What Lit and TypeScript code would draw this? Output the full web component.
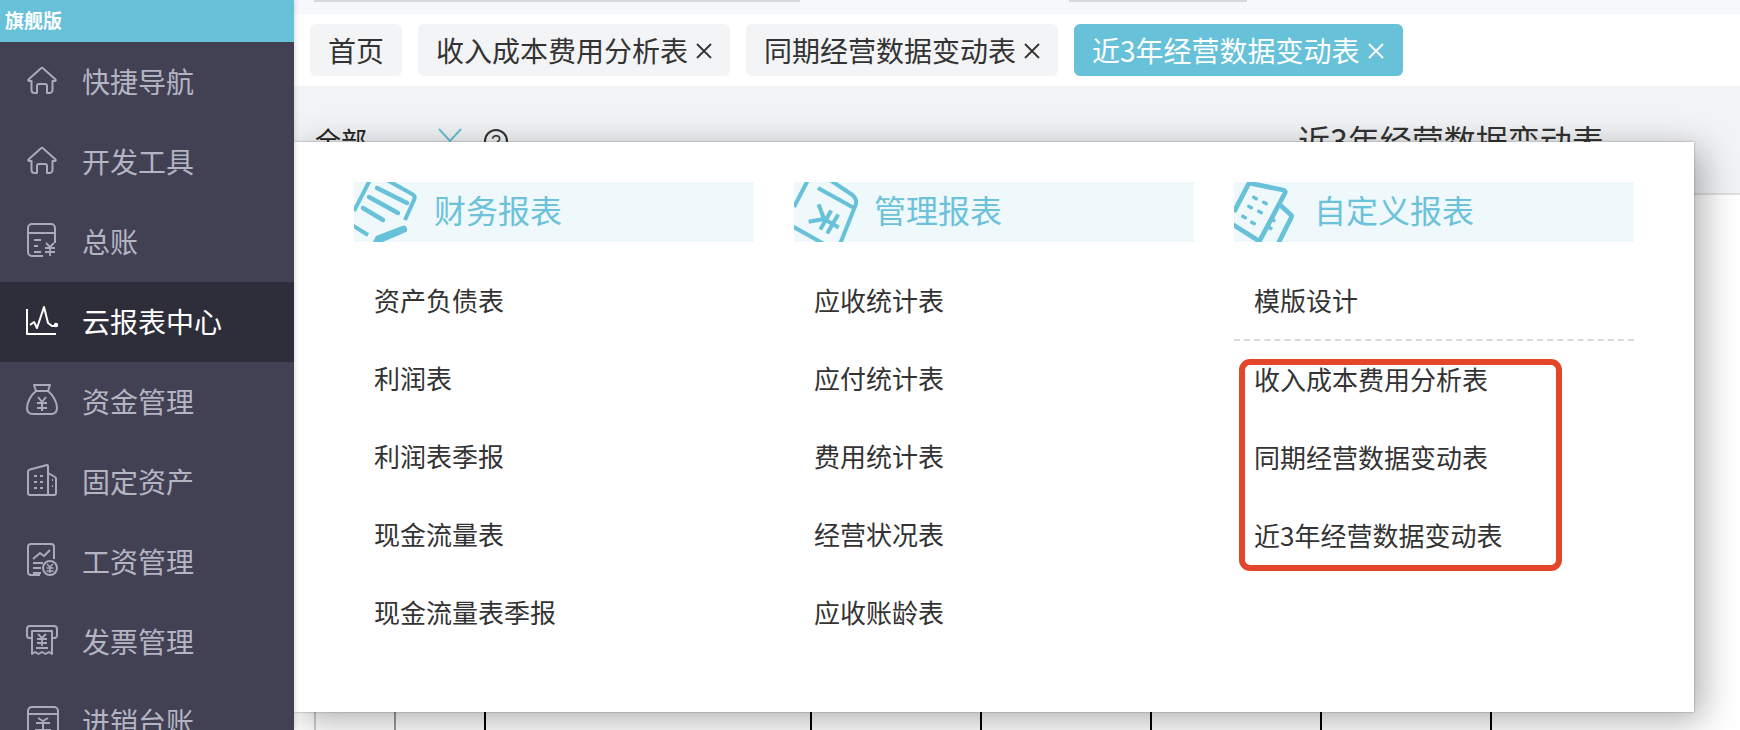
import { LitElement, html, css, svg } from "lit";
import { customElement } from "lit/decorators.js";

const homeIcon = svg`<path d="M2.5 13.5 15 2.2a1.6 1.6 0 0 1 2 0l12.5 11.3a.9.9 0 0 1-.6 1.6H26.5V24a3 3 0 0 1-3 3H21V20a2 2 0 0 0-2-2h-6a2 2 0 0 0-2 2v7H8.500a3 3 0 0 1-3-3v-8.900H3.100a.9.9 0 0 1-.6-1.600Z"/>`;

const sideIcons: Record<string, unknown> = {
  home: homeIcon,
  ledger: svg`<path d="M17 30H6a4 4 0 0 1-4-4V2a4 4 0 0 1 4-4h19a4 4 0 0 1 4 4v15"/><path d="M2 7h27"/><path d="M8 14h7M8 20h4M8 26h7"/><path d="M20 17l4 4 4-4M19 22h10M19 26h10M24 21v9" stroke-width="1.800"/>`,
  chart: svg`<path d="M1 3v25h29"/><path d="M4 19l4-3 3 6L18 1l4 16 4 3h4" stroke-linejoin="round"/><circle cx="30" cy="19" r="1.200" fill="currentColor"/>`,
  bag: svg`<path d="M10 5 8 -1h16l-2 6"/><path d="M10 5h12c5 4 9 11 9 17 0 4-2 6-6 6H7c-4 0-6-2-6-6 0-6 4-13 9-17Z"/><path d="M12 11l4 5 4-5M11 17h10M11 22h10M16 16v9"/>`,
  building: svg`<path d="M2 6v21a2 2 0 0 0 2 2h24a2 2 0 0 0 2-2V13a2 2 0 0 0-1-2l-7-4V0a1 1 0 0 0-1-1L4 3.500A2.500 2.500 0 0 0 2 6Z"/><path d="M22 7v22"/><path d="M8 10h3M14 10h3M8 16h3M14 16h3M8 22h3M14 22h3M26 14h1M26 20h1" stroke-width="2.200"/>`,
  salary: svg`<path d="M14 29H5a3 3 0 0 1-3-3V1a3 3 0 0 1 3-3h20a3 3 0 0 1 3 3v12"/><path d="M7 13l7-6 4 3 6-6"/><path d="M7 17h10M7 22h8M7 27h8"/><circle cx="24" cy="22" r="7"/><path d="M21 18l3 3 3-3M20.500 22h7M20.500 25h7M24 21v6" stroke-width="1.500"/>`,
  invoice: svg`<path d="M6 12H3.500A2.500 2.500 0 0 1 1 9.500V3a3 3 0 0 1 3-3h24a3 3 0 0 1 3 3v6.500A2.500 2.500 0 0 1 28.500 12H26"/><path d="M6 5h20v23l-3-2-3.500 2-3.500-2-3.500 2-3.500-2-3 2Z"/><path d="M12 8l4 4 4-4M11 13h10M11 17h10M16 12v8M10 22h12" stroke-width="1.800"/>`,
  stock: svg`<path d="M2 30V5a4 4 0 0 1 4-4h22a4 4 0 0 1 4 4v25"/><path d="M2 8h30"/><path d="M12 12l5 3 5-3M10 17h14M17 14v10M9 24h16" stroke-width="2"/>`,
};

const panelIcons: Record<string, unknown> = {
  finance: svg`
    <path d="M16 -2 0 29M33 -2 58 12q4 2 2 6L51 38M-2 43 14 53"/>
    <path d="M23 6 53 21M15 15 44 31M9 26 29 38" stroke-linecap="round" stroke-width="4.500"/>
    <path d="M18 62 22 54 48 44a3.500 3.500 0 0 1 3 6.500L24 62Z" fill="currentColor" stroke="none"/>`,
  manage: svg`
    <path d="M14 -2 0 25M36 -2 57 12q6 4 5 10L46 62M-2 44 30 62M24 6 60 26"/>
    <g transform="translate(30 37) rotate(-60)">
      <path d="M-10 -12 0 0 10 -12M-11 2H11M-11 10H11M0 0V17"/>
    </g>`,
  custom: svg`
    <path d="M0 30 14 3q1-2 3-1.500L49 8q3 1 2 3L24 62M-2 42 25 59M44 21 57 33q1 1 0 3L44 62" stroke-width="4.800"/>
    <path d="M19.700 15.300 22.300 16.700M29.700 20.300 32.300 21.700M14.700 24.300 17.300 25.700M24.700 29.300 27.300 30.700M8.700 34.300 11.300 35.700M17.700 40.300 20.300 41.700M38 37.300 40 38.500M35 45.300 37 46.500" stroke-linecap="round" stroke-width="3.400"/>`,
};

const menu = [
  ["home", "快捷导航"],
  ["home", "开发工具"],
  ["ledger", "总账"],
  ["chart", "云报表中心", true],
  ["bag", "资金管理"],
  ["building", "固定资产"],
  ["salary", "工资管理"],
  ["invoice", "发票管理"],
  ["stock", "进销台账"],
] as [string, string, boolean?][];

const tabs = [
  { label: "首页" },
  { label: "收入成本费用分析表", close: true },
  { label: "同期经营数据变动表", close: true },
  { label: "近3年经营数据变动表", close: true, active: true },
];

const columns = [
  { icon: "finance", title: "财务报表", items: ["资产负债表", "利润表", "利润表季报", "现金流量表", "现金流量表季报"] },
  { icon: "manage", title: "管理报表", items: ["应收统计表", "应付统计表", "费用统计表", "经营状况表", "应收账龄表"] },
  { icon: "custom", title: "自定义报表", items: ["模版设计", "收入成本费用分析表", "同期经营数据变动表", "近3年经营数据变动表"], divider: true },
];

@customElement("app-root")
export class AppRoot extends LitElement {
  static styles = css`
    :host {
      display: block;
      width: 1740px;
      height: 730px;
      position: relative;
      overflow: hidden;
      background: #fff;
      font-family: "Noto Sans CJK SC", "Liberation Sans", sans-serif;
      color: #333;
    }
    .shell { display: flex; height: 730px; }
    .sidebar {
      width: 294px;
      flex: none;
      background: #424153;
      overflow: hidden;
      position: relative;
      z-index: 1;
      box-shadow: 0 0 6px rgba(0, 0, 0, 0.2);
    }
    .edition {
      height: 42px;
      background: #67c1d9;
      color: #fff;
      font-size: 19px;
      font-weight: 700;
      line-height: 40px;
      padding-left: 5px;
    }
    .row {
      height: 80px;
      display: flex;
      align-items: center;
      gap: 24px;
      padding-left: 26px;
      color: #b3b5c3;
      font-size: 28px;
    }
    .row span { padding-bottom: 3px; }
    .row svg {
      width: 32px;
      height: 32px;
      flex: none;
      overflow: visible;
      fill: none;
      stroke: currentColor;
      stroke-width: 2;
      stroke-linejoin: round;
      color: #a9abba;
    }
    .row.active { background: #2e2e3b; color: #fff; }
    .row.active svg { color: #fff; }
    .main { flex: 1; min-width: 0; display: flex; flex-direction: column; }
    .strip { height: 14px; background: #f7f8fb; display: flex; align-items: flex-start; }
    .strip i { height: 2px; background: #d8d8d8; display: block; }
    .strip .a { width: 486px; margin-left: 20px; }
    .strip .b { width: 178px; margin-left: 269px; }
    .tabs {
      height: 72px;
      padding: 10px 16px;
      box-sizing: border-box;
      display: flex;
      gap: 16px;
      background: #fff;
    }
    .tab {
      height: 52px;
      padding: 0 18px;
      display: flex;
      align-items: center;
      background: #f3f4f6;
      border-radius: 6px;
      font-size: 28px;
      color: #333;
    }
    .tab.active { background: #67c1d9; color: #fff; padding-right: 19px; }
    .close { width: 24px; height: 24px; margin-top: 2px; }
    .close svg { display: block; width: 24px; height: 24px; fill: none; stroke: currentColor; stroke-width: 1.800; }
    .toolbar {
      height: 109px;
      box-sizing: border-box;
      background: #f2f3f5;
      border-bottom: 2px solid #dedfe1;
      display: flex;
      padding: 36px 0 0 21px;
    }
    .all { font-size: 26px; line-height: 36px; color: #222; width: 123px; }
    .toolbar svg { fill: none; stroke: #67c1d9; stroke-width: 2; overflow: visible; flex: none; }
    .chev { width: 24px; height: 14px; margin-top: 6px; }
    .help { width: 24px; height: 24px; margin: 7px 0 0 22px; }
    .toolbar .help { stroke: #333; }
    .help text { font: 18px "Liberation Sans", sans-serif; fill: #333; stroke: none; }
    .title { font-size: 32px; line-height: 34px; margin-left: 790px; color: #333; }
    .body { flex: 1; display: flex; flex-direction: column; justify-content: flex-end; }
    .grid { height: 30px; display: flex; padding-left: 20px; }
    .grid span { border-left: 2px solid #000; box-sizing: border-box; width: 170px; }
    .grid span:nth-child(1) { width: 80px; border-color: #ccc; }
    .grid span:nth-child(2) { width: 90px; border-color: #999; }
    .grid span:nth-child(3) { width: 326px; }
    .panel {
      position: absolute;
      left: 294px;
      top: 142px;
      width: 1400px;
      height: 570px;
      box-sizing: border-box;
      background: #fff;
      padding: 40px 60px 0;
      display: grid;
      grid-template-columns: repeat(3, 400px);
      column-gap: 40px;
      align-items: start;
      box-shadow: 0 0 2px rgba(0, 0, 0, 0.35), 8px 8px 34px rgba(0, 0, 0, 0.32);
      z-index: 0;
    }
    .head {
      height: 60px;
      background: #eff8fb;
      display: flex;
      align-items: center;
      gap: 16px;
      overflow: hidden;
      color: #6bc2d9;
      font-size: 32px;
      margin-bottom: 20px;
    }
    .head span { padding-bottom: 6px; }
    .head svg {
      width: 64px;
      height: 60px;
      flex: none;
      fill: none;
      stroke: #67c1d9;
      stroke-width: 4;
      stroke-linejoin: round;
      color: #67c1d9;
    }
    .item {
      height: 78px;
      line-height: 76px;
      box-sizing: border-box;
      padding-left: 20px;
      font-size: 26px;
      color: #333;
    }
    .item.divided { border-bottom: 2px dashed #d9d9d9; line-height: 76px; height: 79px; }
    .mark {
      position: absolute;
      left: 945px;
      top: 217px;
      width: 323px;
      height: 212px;
      box-sizing: border-box;
      border: 6px solid #e4462a;
      border-radius: 11px;
    }
  `;

  render() {
    return html`
      <div class="shell">
        <aside class="sidebar">
          <div class="edition">旗舰版</div>
          ${menu.map(
            ([icon, label, active]) => html`
              <div class="row ${active ? "active" : ""}">
                <svg viewBox="0 0 32 32">${sideIcons[icon]}</svg>
                <span>${label}</span>
              </div>
            `
          )}
        </aside>
        <main class="main">
          <div class="strip"><i class="a"></i><i class="b"></i></div>
          <nav class="tabs">
            ${tabs.map(
              (t) => html`
                <div class="tab ${t.active ? "active" : ""}">
                  <span>${t.label}</span>
                  ${t.close
                    ? html`<span class="close"><svg viewBox="0 0 24 24"><path d="M9 5 23 19M23 5 9 19" /></svg></span>`
                    : ""}
                </div>
              `
            )}
          </nav>
          <div class="toolbar">
            <span class="all">全部</span>
            <svg class="chev" viewBox="0 0 24 14"><path d="M1 1 12 13 23 1" /></svg>
            <svg class="help" viewBox="0 0 24 24">
              <circle cx="12" cy="12" r="11" />
              <text x="12" y="18.500" text-anchor="middle">?</text>
            </svg>
            <span class="title">近3年经营数据变动表</span>
          </div>
          <div class="body">
            <div class="grid">
              ${[0, 1, 2, 3, 4, 5, 6, 7].map(() => html`<span></span>`)}
            </div>
          </div>
        </main>
      </div>
      <section class="panel">
        ${columns.map(
          (c) => html`
            <div>
              <div class="head">
                <svg viewBox="0 0 64 60">${panelIcons[c.icon]}</svg>
                <span>${c.title}</span>
              </div>
              ${c.items.map(
                (it, i) => html`<div class="item ${c.divider && i === 0 ? "divided" : ""}">${it}</div>`
              )}
            </div>
          `
        )}
        <div class="mark"></div>
      </section>
    `;
  }
}
